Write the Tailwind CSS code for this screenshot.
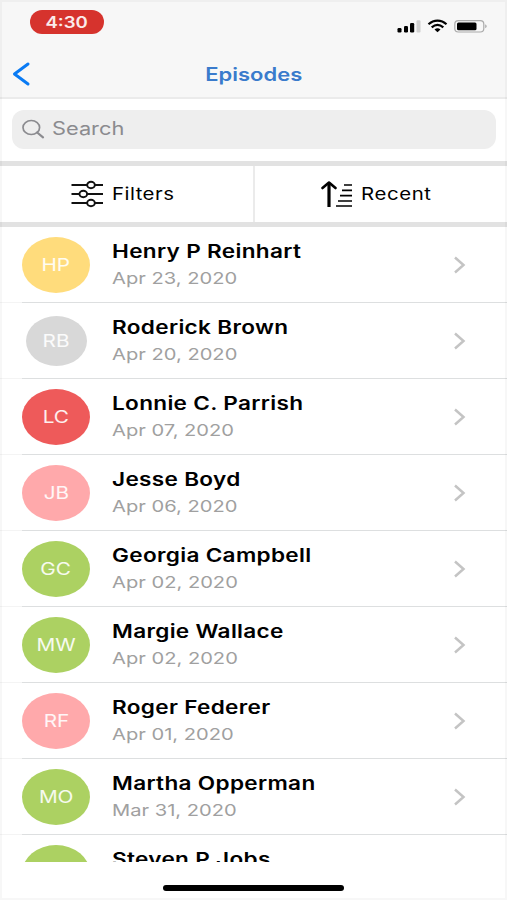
<!DOCTYPE html>
<html lang="en">
<head>
<meta charset="utf-8">
<meta name="viewport" content="width=device-width, initial-scale=1">
<title>Episodes</title>
<script src="https://cdn.jsdelivr.net/npm/@tailwindcss/browser@4"></script>
</head>
<body class="bg-white">
<div class="relative flex h-[900px] w-[507px] flex-col overflow-hidden bg-white font-[Inter,'Liberation_Sans',sans-serif] text-black">
  <header class="h-[99px] shrink-0 border-b-2 border-[#ebebeb] bg-[#f7f7f7]">
    <div class="flex h-[49px] items-start justify-between pt-[10px] pr-[18px] pl-[30px]">
      <div class="flex h-6 w-[74px] items-center justify-center rounded-full bg-[#d6332d] pt-px text-white/90"><span class="scale-x-[1.2] text-[15.500px] leading-6 font-semibold">4:30</span></div>
      <svg class="mt-[8px] h-[18px] w-[92px]" viewBox="0 0 92 18">
        <rect x="0.5" y="10" width="4" height="4.4" rx="1.2"/><rect x="7" y="8" width="4" height="6.4" rx="1.2"/><rect x="13" y="5" width="4.2" height="9.4" rx="1.2"/><rect x="19.5" y="2.2" width="4" height="12.2" rx="1.2" fill="#cfcfcf"/>
        <g fill="none" stroke="#000" stroke-width="2.2"><path d="M31.5 6.2C36.800 1.300 44.200 1.300 49.500 6.200"/><path d="M34.700 9.300C38.300 6.200 42.700 6.200 46.300 9.300"/></g>
        <path d="M37.500 11.500Q40.500 9.200 43.500 11.500L40.500 14.300Z"/>
        <rect x="57.800" y="2.700" width="29" height="11.300" rx="3.500" fill="none" stroke="#aaa" stroke-width="1.200"/><rect x="60" y="4.500" width="19.500" height="7.800" rx="1.500"/><path d="M88.200 6.300Q91.300 8.300 88.200 10.300Z" fill="#aaa"/>
      </svg>
    </div>
    <div class="relative flex h-[50px] items-center justify-center pt-px">
      <svg class="absolute top-[12px] left-[12px] h-[26px] w-[20px]" viewBox="0 0 20 26" fill="none" stroke="#0a7bf4" stroke-width="3" stroke-linecap="round" stroke-linejoin="round"><path d="M16 3L2.500 13L16 23"/></svg>
      <h1 class="scale-x-[1.22] text-[18px] leading-6 font-semibold text-[#3a7bcc]">Episodes</h1>
    </div>
  </header>
  <div class="h-[62px] shrink-0 pt-[10.500px] pr-[11px] pl-[12px]">
    <div class="flex h-[39.500px] items-center rounded-[12px] bg-[#eeeeee] pl-[10px] text-[#8b8b8f]">
      <svg class="h-[20px] w-[30px] shrink-0" viewBox="0 0 30 20" fill="none" stroke="currentColor" stroke-width="1.700" stroke-linecap="round"><ellipse cx="9.300" cy="8.500" rx="8.300" ry="7"/><path d="M15.200 13.500L21 18.300" stroke-width="2.200"/></svg>
      <span class="origin-left scale-x-[1.21] text-[18px] leading-6">Search</span>
    </div>
  </div>
  <div class="flex h-[66px] shrink-0 border-y-[5px] border-[#e2e2e2] bg-white">
    <div class="flex w-[253px] items-center pl-[71px]">
      <svg class="mr-[9px] h-[28px] w-[32px]" viewBox="0 0 32 28" fill="#fff" stroke="#111" stroke-width="1.900"><path d="M.5 5H32M.5 14H32M.5 23H32"/><ellipse cx="20" cy="5" rx="3.800" ry="3.200"/><ellipse cx="12.300" cy="14" rx="3.800" ry="3.200"/><ellipse cx="20" cy="23" rx="3.800" ry="3.200"/></svg>
      <span class="origin-left scale-x-[1.2] text-[17px] leading-6 tracking-[0.4px]">Filters</span>
    </div>
    <div class="flex flex-1 items-center border-l-2 border-[#ebebeb] pl-[66px]">
      <svg class="mr-[8px] h-[28px] w-[32px]" viewBox="0 0 32 28" fill="none" stroke="#000"><path d="M8 27V3" stroke-width="3.200"/><path d="M1.500 8L8 2.500L14.500 8" stroke-width="2.600" stroke-linecap="round" stroke-linejoin="round"/><path d="M23 5H31M21 10.300H31M19 15.700H31M17 21H31M15 26H31" stroke-width="1.700"/></svg>
      <span class="origin-left scale-x-[1.2] text-[17px] leading-6 tracking-[0.5px]">Recent</span>
    </div>
  </div>
  <main id="list" class="h-[635px] shrink-0 overflow-hidden"></main>
  <div class="flex flex-1 justify-center bg-white pt-[23px]"><div class="h-[6px] w-[181px] rounded-full bg-black"></div></div>
  <div class="pointer-events-none absolute inset-0 border-2 border-black/3"></div>
</div>
<template id="row">
  <article class="relative flex h-[76px] items-center">
    <div class="ml-[22px] flex w-[90px] shrink-0"><div data-avatar><span data-initials class="scale-x-[1.22] text-[17px] leading-6 text-white/90"></span></div></div>
    <div class="flex flex-1 flex-col items-start">
      <h2 data-name class="origin-left scale-x-[1.22] text-[18.500px] leading-[27px] font-semibold tracking-[0.260px] whitespace-nowrap"></h2>
      <p data-date class="h-[27px] origin-left scale-x-[1.22] text-[16.500px] leading-[27px] whitespace-nowrap text-[#a0a0a0]"></p>
    </div>
    <svg class="mr-[41px] h-[18px] w-[13px] shrink-0" viewBox="0 0 13 18" fill="none" stroke="#c4c4c4" stroke-width="2.500"><path d="M2 1.500L10.500 9L2 16.500"/></svg>
    <div class="absolute inset-x-0 bottom-0 flex h-[1.500px]"><i class="w-[22px] bg-[#f4f4f4]"></i><i class="flex-1 bg-[#dddfe0]"></i></div>
  </article>
</template>
<script>
const base = 'flex h-[56px] w-[68px] items-center justify-center rounded-[50%] ';
const yellow = base + 'bg-[#ffdc7c]', red = base + 'bg-[#ee5a5a]', pink = base + 'bg-[#ffa9ab]', green = base + 'bg-[#acd162]';
const gray = 'mx-[4px] flex h-[50px] w-[61px] items-center justify-center rounded-[50%] bg-[#d8d8d8]';
const episodes = [
  ['HP', 'Henry P Reinhart', 'Apr 23, 2020', yellow],
  ['RB', 'Roderick Brown', 'Apr 20, 2020', gray],
  ['LC', 'Lonnie C. Parrish', 'Apr 07, 2020', red],
  ['JB', 'Jesse Boyd', 'Apr 06, 2020', pink],
  ['GC', 'Georgia Campbell', 'Apr 02, 2020', green],
  ['MW', 'Margie Wallace', 'Apr 02, 2020', green],
  ['RF', 'Roger Federer', 'Apr 01, 2020', pink],
  ['MO', 'Martha Opperman', 'Mar 31, 2020', green],
  ['', 'Steven P Jobs', '', green]
];
const list = document.getElementById('list');
for (const [initials, name, date, avatar] of episodes) {
  const row = document.getElementById('row').content.cloneNode(true);
  row.querySelector('[data-avatar]').className = avatar;
  row.querySelector('[data-initials]').textContent = initials;
  row.querySelector('[data-name]').textContent = name;
  row.querySelector('[data-date]').textContent = date;
  list.append(row);
}
</script>
</body>
</html>
